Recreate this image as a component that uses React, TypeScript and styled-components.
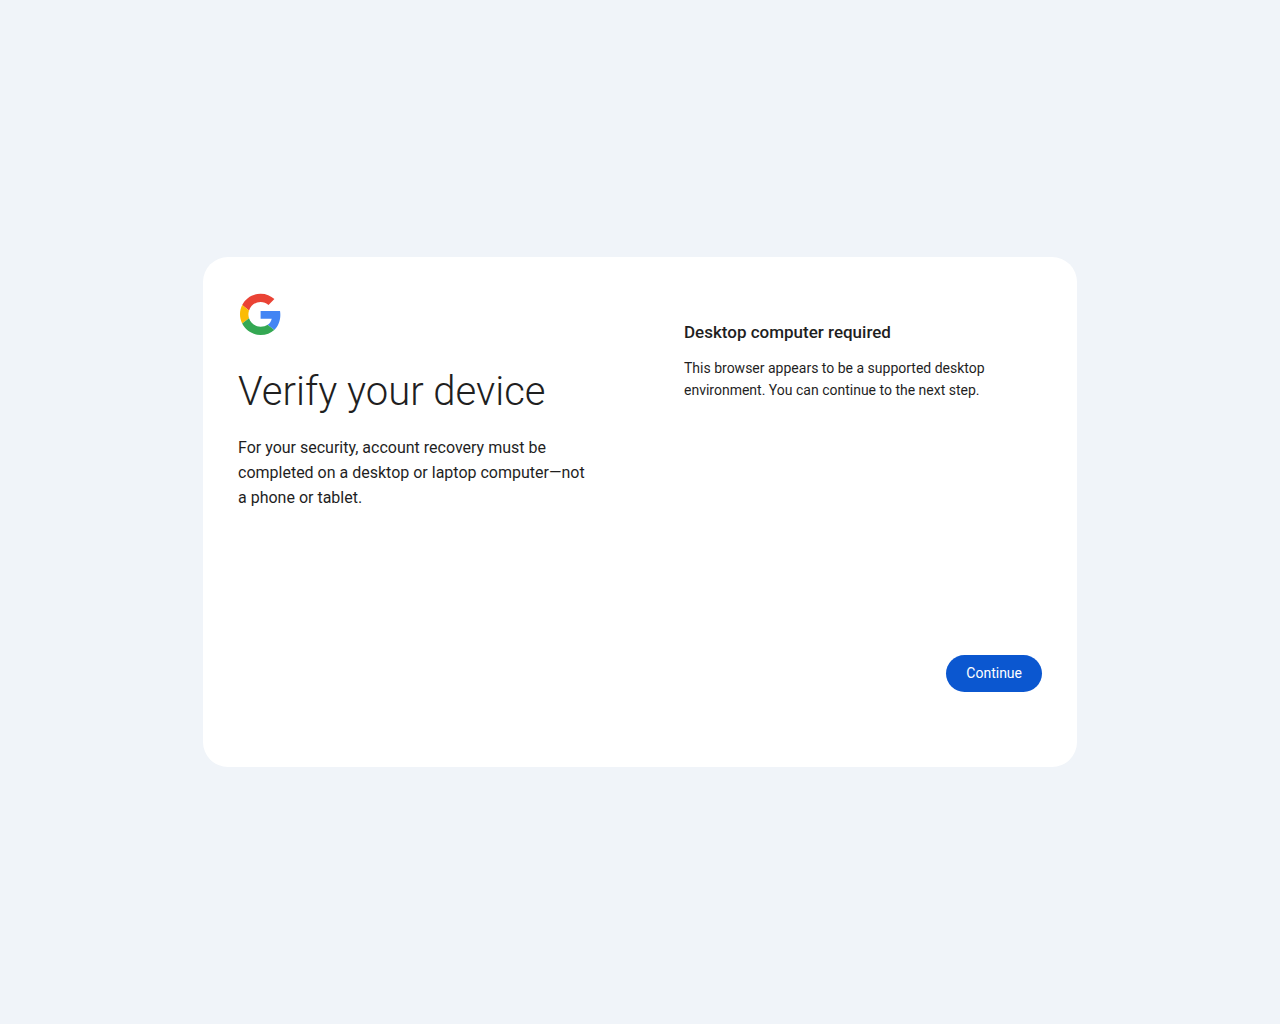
import React from "react";
import styled, { createGlobalStyle } from "styled-components";

const GlobalStyle = createGlobalStyle`
  *, *::before, *::after { box-sizing: border-box; }
  body {
    margin: 0;
    background: #f0f4f9;
    color: #1f1f1f;
    font-family: Roboto, "Liberation Sans", sans-serif;
  }
`;

const Page = styled.main`
  min-height: 100vh;
  display: flex;
  align-items: center;
  justify-content: center;
  padding: 24px;
`;

const Card = styled.section`
  width: 100%;
  max-width: 874px;
  min-height: 510px;
  display: grid;
  grid-template-columns: 1fr 1fr;
  gap: 88px;
  padding: 35px;
  background: #ffffff;
  border-radius: 25px;

  @media (max-width: 760px) {
    grid-template-columns: 1fr;
    gap: 32px;
  }
`;

const Intro = styled.div``;

const Logo = styled.svg`
  display: block;
  width: 44px;
  height: 44px;
`;

const Title = styled.h1`
  margin: 31px 0 18px;
  font-size: 40px;
  font-weight: 300;
  line-height: 50px;
`;

const Lead = styled.p`
  margin: 0;
  font-size: 16px;
  line-height: 25px;
`;

const Details = styled.div`
  display: flex;
  flex-direction: column;
  padding: 29px 0 40px;
`;

const Subtitle = styled.h2`
  margin: 0 0 14px;
  font-size: 17px;
  font-weight: 500;
  line-height: 22px;
`;

const Message = styled.p`
  margin: 0;
  font-size: 14px;
  line-height: 22px;
`;

const Actions = styled.div`
  display: flex;
  justify-content: flex-end;
  margin-top: auto;
`;

const PrimaryButton = styled.button`
  padding: 10px 20px;
  border: 0;
  border-radius: 20px;
  background: #0b57d0;
  color: #ffffff;
  font: 400 14px/17px Roboto, "Liberation Sans", sans-serif;
  cursor: pointer;
`;

export default function App() {
  return (
    <>
      <GlobalStyle />
      <Page>
        <Card>
          <Intro>
            <Logo viewBox="-2.3 -2 51.2 51.2" role="img" aria-label="Google">
              <path fill="#EA4335" d="M24 9.5c3.54 0 6.71 1.22 9.21 3.6l6.85-6.85C35.9 2.38 30.47 0 24 0 14.62 0 6.51 5.38 2.56 13.22l7.98 6.19C12.43 13.72 17.74 9.5 24 9.5z" />
              <path fill="#4285F4" d="M46.98 24.55c0-1.57-.15-3.09-.38-4.55H24v9.02h12.94c-.58 2.96-2.26 5.48-4.78 7.18l7.73 6c4.51-4.18 7.09-10.36 7.09-17.65z" />
              <path fill="#FBBC05" d="M10.53 28.59c-.48-1.45-.76-2.99-.76-4.59s.27-3.14.76-4.59l-7.98-6.19C.92 16.46 0 20.12 0 24c0 3.88.92 7.54 2.56 10.78l7.97-6.19z" />
              <path fill="#34A853" d="M24 48c6.48 0 11.93-2.13 15.89-5.81l-7.73-6c-2.15 1.45-4.92 2.3-8.16 2.3-6.26 0-11.57-4.22-13.47-9.91l-7.98 6.19C6.51 42.62 14.62 48 24 48z" />
            </Logo>
            <Title>Verify your device</Title>
            <Lead>
              For your security, account recovery must be completed on a desktop
              or laptop computer—not a phone or tablet.
            </Lead>
          </Intro>
          <Details>
            <Subtitle>Desktop computer required</Subtitle>
            <Message>
              This browser appears to be a supported desktop environment. You
              can continue to the next step.
            </Message>
            <Actions>
              <PrimaryButton type="button">Continue</PrimaryButton>
            </Actions>
          </Details>
        </Card>
      </Page>
    </>
  );
}
